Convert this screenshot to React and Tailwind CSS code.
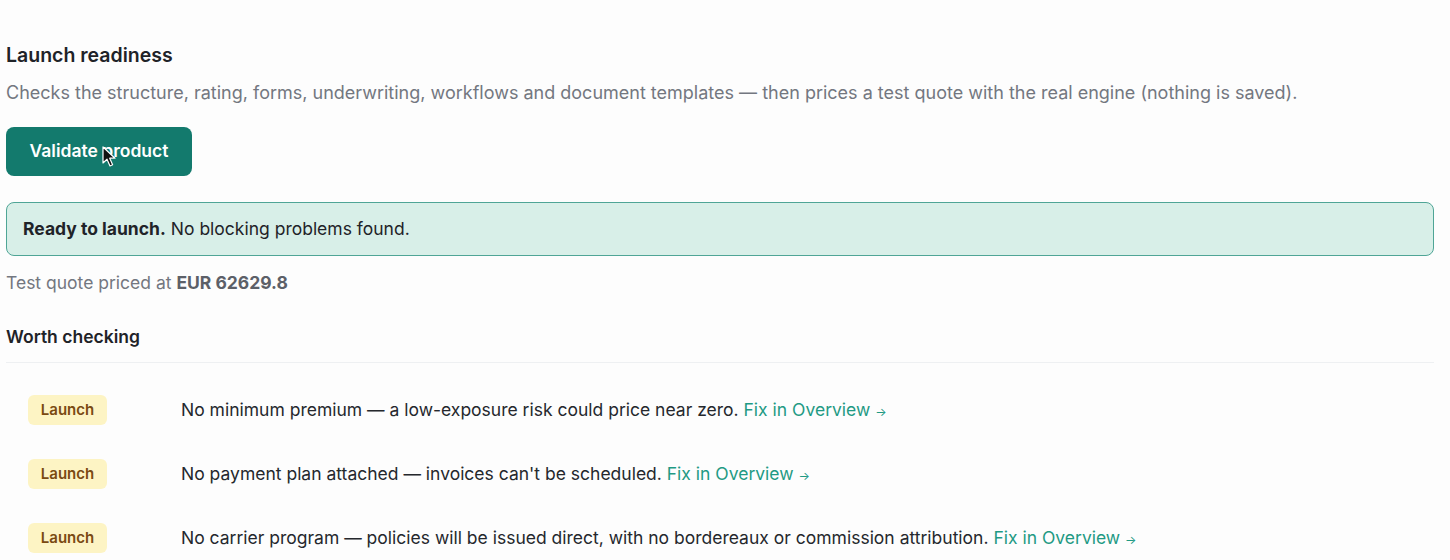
import React from 'react';

const checks = [
  {
    tag: 'Launch',
    text: 'No minimum premium — a low-exposure risk could price near zero.',
  },
  {
    tag: 'Launch',
    text: "No payment plan attached — invoices can't be scheduled.",
  },
  {
    tag: 'Launch',
    text: 'No carrier program — policies will be issued direct, with no bordereaux or commission attribution.',
  },
];

const Pointer = () => (
  <svg
    className="absolute left-[96px] top-[19px] pointer-events-none"
    width="16"
    height="22"
    viewBox="0 0 16 22"
  >
    <path
      d="M1 1 L1 17 L5 13.2 L8 20 L10.6 18.8 L7.7 12.2 L13 12.2 Z"
      fill="#111"
      stroke="#fff"
      strokeWidth="1.2"
      strokeLinejoin="round"
    />
  </svg>
);

const App = () => {
  return (
    <div
      className="min-h-[560px] bg-[#fdfdfd] px-[6px] pt-[43px] pr-[16px]"
      style={{ fontFamily: 'Inter, "Noto Sans", sans-serif' }}
    >
      <h2 className="text-[19.5px] font-semibold text-[#1f2328] leading-[24px]">
        Launch readiness
      </h2>
      <p className="mt-[14px] text-[18px] text-[#737780] leading-[24px]">
        Checks the structure, rating, forms, underwriting, workflows and document templates — then prices a test quote with the real engine (nothing is saved).
      </p>

      <button className="relative mt-[22px] h-[49px] w-[186px] rounded-[8px] bg-[#137a6d] text-[17.5px] font-semibold text-white">
        Validate product
        <Pointer />
      </button>

      <div className="mt-[26px] flex h-[54px] items-center rounded-[8px] border border-[#4fa596] bg-[#d8efe8] px-[16px] text-[17.5px] text-[#1f2328]">
        <span className="font-bold">Ready to launch.</span>
        <span className="ml-[5px]">No blocking problems found.</span>
      </div>

      <p className="mt-[15px] text-[17.5px] text-[#737780] leading-[24px]">
        Test quote priced at{' '}
        <span className="font-bold text-[#5c6068]">EUR 62629.8</span>
      </p>

      <h3 className="mt-[30px] text-[17.5px] font-semibold text-[#1f2328] leading-[24px]">
        Worth checking
      </h3>
      <div className="mt-[13px] border-t border-[#eef0f2]" />

      <ul className="mt-[32px] flex flex-col gap-[34px]">
        {checks.map((c, i) => (
          <li key={i} className="flex items-center h-[30px]">
            <span className="ml-[22px] flex h-[30px] w-[79px] items-center justify-center rounded-[6px] bg-[#fdf4c4] text-[15px] font-semibold text-[#7a4a12]">
              {c.tag}
            </span>
            <span className="ml-[74px] text-[17.5px] text-[#25282d]">
              {c.text}{' '}
              <a href="#" className="text-[#1f9a84]">
                Fix in Overview <span className="text-[12px]">→</span>
              </a>
            </span>
          </li>
        ))}
      </ul>
    </div>
  );
};

export default App;
